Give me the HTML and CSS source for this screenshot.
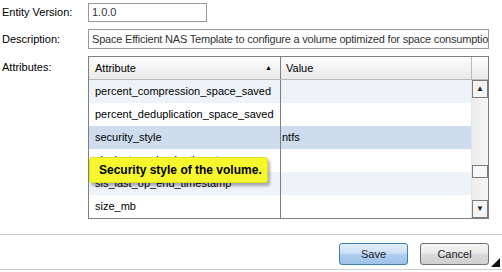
FILE: index.html
```html
<!DOCTYPE html>
<html lang="en">
<head>
    <meta charset="UTF-8">
    <title>Edit Template</title>
    <link rel="stylesheet" href="styles.css">
</head>
<body>
    <div class="form">
        <div class="field">
            <label>Entity Version:</label>
            <div class="input short">1.0.0</div>
        </div>
        <div class="field">
            <label>Description:</label>
            <div class="input wide">Space Efficient NAS Template to configure a volume optimized for space consumption</div>
        </div>
        <div class="field">
            <label>Attributes:</label>
            <div class="grid">
                <div class="grid-head">
                    <div class="col-attr">Attribute <span class="sort">&#9650;</span></div>
                    <div class="col-value">Value</div>
                    <div class="col-scroll"></div>
                </div>
                <div class="grid-body">
                    <div class="rows">
                        <div class="row alt"><div class="col-attr">percent_compression_space_saved</div><div class="col-value"></div></div>
                        <div class="row"><div class="col-attr">percent_deduplication_space_saved</div><div class="col-value"></div></div>
                        <div class="row selected"><div class="col-attr">security_style</div><div class="col-value">ntfs</div></div>
                        <div class="row"><div class="col-attr">sis_last_op_begin_timestamp</div><div class="col-value"></div></div>
                        <div class="row alt"><div class="col-attr">sis_last_op_end_timestamp</div><div class="col-value"></div></div>
                        <div class="row"><div class="col-attr">size_mb</div><div class="col-value"></div></div>
                    </div>
                    <div class="scrollbar">
                        <div class="arrow">&#9650;</div>
                        <div class="track"><div class="thumb"></div></div>
                        <div class="arrow">&#9660;</div>
                    </div>
                </div>
            </div>
        </div>
    </div>

    <div class="tooltip">Security style of the volume.</div>

    <div class="footer">
        <button class="btn primary">Save</button>
        <button class="btn">Cancel</button>
        <div class="grip"></div>
    </div>
</body>
</html>
```

FILE: styles.css
```css
body {
    margin: 0;
    font-family: "Liberation Sans", Arial, sans-serif;
    font-size: 11px;
    color: #000;
    background: #fff;
    width: 502px;
    height: 272px;
    overflow: hidden;
    position: relative;
}
.form {
    padding: 3px 13px 0 2px;
    display: flex;
    flex-direction: column;
    gap: 7px;
}
.field {
    display: flex;
    align-items: flex-start;
}
.field label {
    width: 86px;
    flex: none;
    line-height: 19px;
}
.field:nth-child(2) label {
    line-height: 20px;
}
.field:nth-child(3) label {
    line-height: 23px;
}
.input {
    border: 1px solid #9a9a9a;
    height: 17px;
    line-height: 17px;
    padding: 0 3px;
    color: #333;
    white-space: nowrap;
    overflow: hidden;
}
.input.short {
    width: 111px;
}
.input.wide {
    height: 18px;
    line-height: 18px;
    width: 395px;
    letter-spacing: -0.2px;
}
.grid {
    width: 399px;
    border: 1px solid #7f7f7f;
}
.grid-head {
    display: flex;
    height: 22px;
    line-height: 22px;
    background: linear-gradient(#fdfdfd, #e9e9e9);
    border-bottom: 1px solid #b8b8b8;
}
.col-attr {
    width: 185px;
    padding-left: 6px;
    border-right: 1px solid #7f7f7f;
    white-space: nowrap;
    overflow: hidden;
    position: relative;
}
.col-value {
    flex: 1;
    padding-left: 5px;
}
.grid-head .col-value {
    border-right: 1px solid #b8b8b8;
}
.col-scroll {
    width: 16px;
}
.sort {
    position: absolute;
    right: 8px;
    top: 0;
    font-size: 7px;
}
.grid-body {
    display: flex;
}
.rows {
    flex: 1;
}
.row {
    display: flex;
    height: 23px;
    line-height: 23px;
}
.row.alt {
    background: #eef3fa;
}
.row.selected {
    background: #cfdcee;
}
.row .col-value {
    padding-left: 1px;
}
.scrollbar {
    width: 16px;
    display: flex;
    flex-direction: column;
    background: linear-gradient(90deg, #ececec, #f6f6f6);
    border-left: 1px solid #e4e4e4;
}
.arrow {
    height: 16px;
    border: 1px solid #7a7a7a;
    background: #f4f4f4;
    font-size: 8px;
    line-height: 16px;
    text-align: center;
    color: #222;
}
.track {
    flex: 1;
    position: relative;
}
.thumb {
    position: absolute;
    left: 0;
    right: 0;
    top: 67px;
    height: 11px;
    border: 1px solid #7a7a7a;
    background: #f8f8f8;
}
.tooltip {
    position: absolute;
    left: 89px;
    top: 157px;
    width: 168px;
    height: 24px;
    line-height: 24px;
    padding-left: 9px;
    background: #f7f72e;
    border: 1px solid #e0e020;
    border-radius: 3px;
    font-weight: bold;
    font-size: 12px;
    box-shadow: 2px 3px 3px rgba(0, 0, 0, 0.3);
}
.footer {
    position: absolute;
    left: 0;
    right: 0;
    top: 234px;
    height: 36px;
    border-top: 1px solid #cfcfcf;
    border-bottom: 1px solid #cfcfcf;
    display: flex;
    justify-content: flex-end;
    align-items: flex-start;
    padding: 8px 13px 0 0;
    gap: 12px;
    box-sizing: border-box;
}
.btn {
    width: 69px;
    height: 22px;
    font-family: "Liberation Sans", Arial, sans-serif;
    font-size: 11px;
    border: 1px solid #707070;
    border-radius: 3px;
    background: linear-gradient(#f6f6f6 0%, #e8e8e8 50%, #d9d9d9 51%, #d0d0d0 100%);
    color: #222;
    padding: 0;
}
.btn.primary {
    border-color: #3c7fb1;
    background: linear-gradient(#e4effa 0%, #c8ddf3 50%, #afcdee 51%, #9fc2e8 100%);
}
.grip {
    position: absolute;
    right: 2px;
    bottom: 2px;
    width: 0;
    height: 0;
    border-left: 9px solid transparent;
    border-bottom: 9px solid #111;
}
```
